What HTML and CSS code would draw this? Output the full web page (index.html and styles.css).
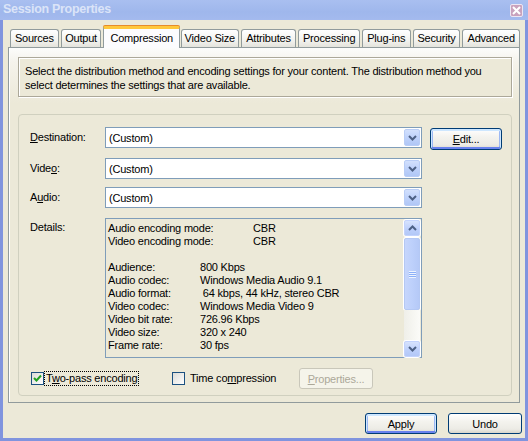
FILE: index.html
```html
<!DOCTYPE html>
<html>
<head>
<meta charset="utf-8">
<title>Session Properties</title>
<link rel="stylesheet" href="styles.css">
</head>
<body>
<div class="window">
  <div class="titlebar">
    <span class="title">Session Properties</span>
    <span class="close"><svg width="9" height="9" viewBox="0 0 9 9"><path d="M1 1 L8 8 M8 1 L1 8" stroke="#fff" stroke-width="2"/></svg></span>
  </div>
  <div class="frame">
    <div class="tabs">
      <div class="tab t-sources">Sources</div>
      <div class="tab t-output">Output</div>
      <div class="tab sel t-comp">Compression</div>
      <div class="tab t-vsize">Video Size</div>
      <div class="tab t-attr">Attributes</div>
      <div class="tab t-proc">Processing</div>
      <div class="tab t-plug">Plug-ins</div>
      <div class="tab t-sec">Security</div>
      <div class="tab t-adv">Advanced</div>
    </div>
    <div class="panel">
      <div class="info">Select the distribution method and encoding settings for your content. The distribution method you<br>select determines the settings that are available.</div>
      <div class="group">
        <div class="row r1">
          <div class="lbl"><u>D</u>estination:</div>
          <div class="combo"><span class="val">(Custom)</span><span class="drop"><svg width="9" height="6" viewBox="0 0 9 6"><polyline points="1,1 4.5,4.5 8,1" fill="none" stroke="#4d6185" stroke-width="2"/></svg></span></div>
          <div class="btn def edit"><u>E</u>dit...</div>
        </div>
        <div class="row r2">
          <div class="lbl">Vide<u>o</u>:</div>
          <div class="combo"><span class="val">(Custom)</span><span class="drop"><svg width="9" height="6" viewBox="0 0 9 6"><polyline points="1,1 4.5,4.5 8,1" fill="none" stroke="#4d6185" stroke-width="2"/></svg></span></div>
        </div>
        <div class="row r3">
          <div class="lbl">A<u>u</u>dio:</div>
          <div class="combo"><span class="val">(Custom)</span><span class="drop"><svg width="9" height="6" viewBox="0 0 9 6"><polyline points="1,1 4.5,4.5 8,1" fill="none" stroke="#4d6185" stroke-width="2"/></svg></span></div>
        </div>
        <div class="row r4">
          <div class="lbl dlbl">Details:</div>
          <div class="list">
            <div class="lines">
              <div class="ln"><span class="k wide">Audio encoding mode:</span><span>CBR</span></div>
              <div class="ln"><span class="k wide">Video encoding mode:</span><span>CBR</span></div>
              <div class="ln"></div>
              <div class="ln"><span class="k">Audience:</span><span>800 Kbps</span></div>
              <div class="ln"><span class="k">Audio codec:</span><span>Windows Media Audio 9.1</span></div>
              <div class="ln"><span class="k">Audio format:</span><span>&nbsp;64 kbps, 44 kHz, stereo CBR</span></div>
              <div class="ln"><span class="k">Video codec:</span><span>Windows Media Video 9</span></div>
              <div class="ln"><span class="k">Video bit rate:</span><span>726.96 Kbps</span></div>
              <div class="ln"><span class="k">Video size:</span><span>320 x 240</span></div>
              <div class="ln"><span class="k">Frame rate:</span><span>30 fps</span></div>
            </div>
            <div class="sbar">
              <div class="sbtn"><svg width="9" height="6" viewBox="0 0 9 6"><polyline points="1,5 4.5,1.5 8,5" fill="none" stroke="#4d6185" stroke-width="2"/></svg></div>
              <div class="thumb"><span class="grip"></span></div>
              <div class="track"></div>
              <div class="sbtn"><svg width="9" height="6" viewBox="0 0 9 6"><polyline points="1,1 4.5,4.5 8,1" fill="none" stroke="#4d6185" stroke-width="2"/></svg></div>
            </div>
          </div>
        </div>
        <div class="row checks">
          <div class="chk chk1">
            <span class="cb"><svg width="9" height="9" viewBox="0 0 9 9"><polyline points="1,4 3.5,6.5 8,1.5" fill="none" stroke="#21a121" stroke-width="2"/></svg></span>
            <span class="cblabel focus">T<u>w</u>o-pass encoding</span>
          </div>
          <div class="chk chk2">
            <span class="cb"></span>
            <span class="cblabel">Time co<u>m</u>pression</span>
          </div>
          <div class="btn dis props"><u>P</u>roperties...</div>
        </div>
      </div>
    </div>
    <div class="actions">
      <div class="btn def">Apply</div>
      <div class="btn undo">Undo</div>
    </div>
  </div>
</div>
</body>
</html>
```
FILE: styles.css
```css
* { box-sizing: border-box; }
html, body { margin: 0; padding: 0; }
body {
  width: 528px;
  height: 441px;
  overflow: hidden;
  font-family: "Liberation Sans", Arial, sans-serif;
  font-size: 11px;
  letter-spacing: -0.2px;
  color: #000;
  background: #ece9d8;
}
.window {
  width: 528px;
  height: 441px;
  display: flex;
  flex-direction: column;
}
.titlebar {
  height: 20px;
  flex: none;
  display: flex;
  align-items: flex-start;
  justify-content: space-between;
  background: linear-gradient(to bottom, #a9bff0, #9fb7ec 60%, #a4baee);
  padding-left: 3px;
  padding-right: 5px;
}
.title {
  font-weight: bold;
  font-size: 12.5px;
  line-height: 20px;
  color: #dbe4f8;
  letter-spacing: -0.3px;
  margin-top: -1px;
}
.close {
  width: 13px;
  height: 13px;
  margin-top: 4px;
  background: #c9a2bd;
  border: 1px solid #ece6f3;
  border-radius: 2px;
  display: flex;
  align-items: center;
  justify-content: center;
}
.frame {
  flex: 1;
  display: flex;
  flex-direction: column;
  border-left: 3px solid #8094de;
  border-right: 3px solid #8094de;
  border-bottom: 3px solid #8094de;
  padding: 6px 5px 4px 5px;
  background: #ece9d8;
}
.tabs {
  height: 21px;
  display: flex;
  align-items: flex-end;
  padding-left: 2px;
  gap: 2px;
  position: relative;
  z-index: 1;
}
.tab {
  height: 18px;
  line-height: 17px;
  padding: 0;
  text-align: center;
  border: 1px solid #919b9c;
  border-bottom: 0;
  border-radius: 3px 3px 0 0;
  background: linear-gradient(to bottom, #ffffff, #f3f3ef 60%, #e4e3dc);
  white-space: nowrap;
}
.t-sources { width: 49px; }
.t-output { width: 41px; }
.t-comp { width: 77px; }
.t-vsize { width: 58px; }
.t-attr { width: 56px; }
.t-proc { width: 62px; }
.t-plug { width: 49px; }
.t-sec { width: 48px; }
.t-adv { width: 58px; }
.tab.sel {
  height: 22px;
  margin-bottom: -1px;
  margin-right: -1px;
  line-height: 19px;
  background: #fcfcfe;
  border-top: 3px solid #ffc83c;
  box-shadow: 0 -1px 0 #e68b2c;
  border-radius: 2px 2px 0 0;
}
.panel {
  height: 356px;
  border: 1px solid #919b9c;
  background: linear-gradient(to bottom, #fcfcfb 0px, #f5f3ec 14px, #ece9d8 55px);
  padding: 9px 7px 6px 9px;
  box-shadow: inset 1px 0 0 #fff;
}
.info {
  height: 40px;
  border: 1px solid #aca899;
  box-shadow: 1px 1px 0 #fff, inset 1px 1px 0 #fff;
  background: #ece9d8;
  padding: 6px 6px 0 6px;
  line-height: 14px;
  white-space: nowrap;
}
.group {
  margin-top: 17px;
  height: 282px;
  border: 1px solid #d0d0bf;
  border-radius: 4px;
  padding: 12px 0 6px 11px;
}
.row {
  display: flex;
  align-items: flex-start;
}
.r1 { height: 21px; }
.r2 { height: 21px; margin-top: 10px; }
.r3 { height: 21px; margin-top: 8px; }
.r4 { height: 140px; margin-top: 10px; }
.lbl {
  width: 75px;
  flex: none;
  line-height: 21px;
}
.dlbl { line-height: 13px; padding-top: 3px; }
.combo {
  width: 317px;
  height: 21px;
  border: 1px solid #7f9db9;
  background: #fff;
  display: flex;
  align-items: center;
  justify-content: space-between;
}
.val { padding-left: 3px; }
.drop {
  width: 16px;
  height: 17px;
  margin-right: 1px;
  border: 1px solid #b9cdf6;
  border-radius: 2px;
  background: linear-gradient(to bottom, #d2e0fd, #bfd2fb 50%, #b0c7f6);
  display: flex;
  align-items: center;
  justify-content: center;
}
.btn {
  height: 21px;
  border: 1px solid #003c74;
  border-radius: 3px;
  background: linear-gradient(to bottom, #ffffff, #f4f3ee 40%, #ecebe5 80%, #d8d5cb);
  display: flex;
  align-items: center;
  justify-content: center;
  white-space: nowrap;
}
.btn.def {
  box-shadow: inset 0 1px 0 1px #cee7ff, inset 0 -1px 0 1px #6982ee, inset 1px 0 0 1px #9db8f3, inset -1px 0 0 1px #9db8f3;
}
.edit {
  width: 72px;
  height: 22px;
  margin-left: 8px;
  margin-top: 1px;
}
.list {
  width: 317px;
  height: 140px;
  border: 1px solid #7f9db9;
  background: #ece9d8;
  display: flex;
}
.lines {
  flex: 1;
  padding: 3px 0 0 2px;
  line-height: 13px;
}
.ln { height: 13px; display: flex; white-space: nowrap; }
.k { width: 92px; flex: none; }
.k.wide { width: 145px; }
.sbar {
  width: 16px;
  margin-right: 1px;
  padding-top: 1px;
  display: flex;
  flex-direction: column;
}
.sbtn {
  height: 16px;
  border: 1px solid #c3d3fd;
  border-radius: 2px;
  background: linear-gradient(to bottom, #d7e3fd, #bccffb 60%, #b3c8f7);
  display: flex;
  align-items: center;
  justify-content: center;
  box-shadow: 0 0 0 1px #fff;
}
.thumb {
  height: 72px;
  margin-top: 2px;
  border: 1px solid #b4c8f4;
  border-radius: 2px;
  background: linear-gradient(to right, #c6d6fc, #bdd0fb 50%, #b5c9f7);
  display: flex;
  align-items: center;
  justify-content: center;
  box-shadow: 0 0 0 1px #fff;
}
.grip {
  width: 7px;
  height: 7px;
  background: repeating-linear-gradient(to bottom, #eef4fe 0 1px, #8cb0f8 1px 2px);
}
.track {
  flex: 1;
  background: linear-gradient(to right, #efefe9, #fbfbf8);
}
.checks {
  height: 21px;
  margin-top: 10px;
  align-items: center;
}
.chk {
  display: flex;
  align-items: center;
  flex: none;
}
.chk1 { width: 142px; padding-left: 1px; }
.chk2 { width: 127px; }
.cb {
  width: 13px;
  height: 13px;
  flex: none;
  border: 1px solid #1c5180;
  background: linear-gradient(135deg, #dcdcd7, #fefefe);
  display: flex;
  align-items: center;
  justify-content: center;
}
.cblabel {
  margin-left: 1px;
  padding: 0 1px;
  line-height: 13px;
  white-space: nowrap;
}
.chk2 .cblabel { margin-left: 4px; }
.focus { outline: 1px dotted #000; }
.props { width: 74px; }
.btn.dis {
  border-color: #c9c7ba;
  background: #f5f4ea;
  color: #aca899;
}
.actions {
  margin-top: 10px;
  height: 21px;
  display: flex;
  justify-content: flex-end;
  gap: 11px;
  margin-right: -2px;
}
.actions .btn { width: 72px; }
.actions .undo { width: 74px; }
```
